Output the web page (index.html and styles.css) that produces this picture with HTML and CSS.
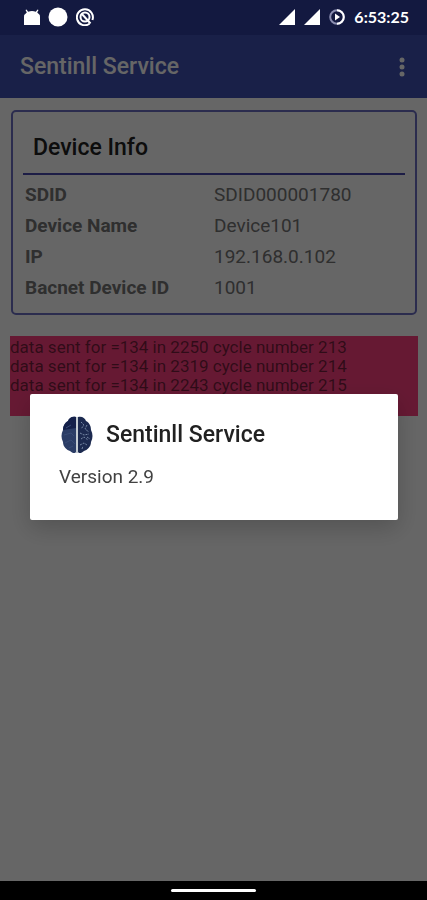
FILE: index.html
```html
<!DOCTYPE html>
<html lang="en">

<head>
  <meta charset="UTF-8" />
  <meta name="viewport" content="width=device-width, initial-scale=1.0">
  <title>Sentinll Service</title>
  <link rel="stylesheet" href="styles.css">
</head>

<body>
  <div class="statusbar">
    <div class="status-icons">
      <svg width="16" height="18" viewBox="0 0 16 18" fill="#fff">
        <path d="M0 17V9a8 6 0 0 1 2.800-4.500L1.500 2l1-.6 1.700 2.400a9 9 0 0 1 7.600 0l1.700-2.400 1 .6-1.300 2.500A8 6 0 0 1 16 9v8z" />
      </svg>
      <svg width="20" height="20" viewBox="0 0 20 20">
        <circle cx="10" cy="10" r="9.500" fill="#fff" />
      </svg>
      <svg width="18" height="18" viewBox="0 0 18 18" fill="none" stroke="#fff">
        <path d="M13.500 15.800A8 8 0 1 1 16.400 12" stroke-width="2" />
        <circle cx="9" cy="9" r="4.500" stroke-width="2" />
        <path d="M5.500 5.500l9 10" stroke-width="2" />
      </svg>
    </div>
    <div class="status-icons status-right">
      <svg width="16" height="16" viewBox="0 0 16 16" fill="#fff">
        <path d="M16 0v16H0z" />
      </svg>
      <svg width="16" height="16" viewBox="0 0 16 16" fill="#fff">
        <path d="M16 0v16H0z" />
      </svg>
      <svg width="16" height="16" viewBox="0 0 16 16" fill="none" stroke="#fff" stroke-width="2">
        <circle cx="8" cy="8" r="6.800" stroke="#8a8db0" />
        <path d="M8 1.200a6.800 6.800 0 0 1 0 13.600" />
        <path d="M6 4.500v7l5-3.500z" fill="#fff" stroke="none" />
      </svg>
      <span class="clock">6:53:25</span>
    </div>
  </div>

  <header class="topbar">
    <h1>Sentinll Service</h1>
    <button type="button" class="menu-btn" aria-label="More options">
      <svg width="6" height="20" viewBox="0 0 6 20" fill="#fff">
        <circle cx="3" cy="3" r="2.500" />
        <circle cx="3" cy="10" r="2.500" />
        <circle cx="3" cy="17" r="2.500" />
      </svg>
    </button>
  </header>

  <main class="main-content">
    <section class="card">
      <h2>Device Info</h2>
      <table class="info">
        <tr>
          <th scope="row">SDID</th>
          <td>SDID000001780</td>
        </tr>
        <tr>
          <th scope="row">Device Name</th>
          <td>Device101</td>
        </tr>
        <tr>
          <th scope="row">IP</th>
          <td>192.168.0.102</td>
        </tr>
        <tr>
          <th scope="row">Bacnet Device ID</th>
          <td>1001</td>
        </tr>
      </table>
    </section>

    <div class="log">
      <p>data sent for =134 in 2250 cycle number 213</p>
      <p>data sent for =134 in 2319 cycle number 214</p>
      <p>data sent for =134 in 2243 cycle number 215</p>
    </div>
  </main>

  <div class="navbar"><span class="nav-handle"></span></div>

  <!-- About dialog -->
  <div class="scrim">
    <div class="dialog" role="dialog" aria-labelledby="about-title">
      <div class="dialog-title">
        <svg width="32" height="38" viewBox="0 0 32 38">
          <path d="M15 1C11 0 8 2 7 5 3 7 2 11 2 14c-2 4-2 8 0 12 0 5 4 8 7 9 2 2 5 3 6 1z" fill="#2b3d66" />
          <path d="M15 1C11 0 8 2 7 5 4 7 2 10 2 14l13-2z" fill="#14204a" />
          <path d="M17 1c4-1 7 1 8 4 4 2 5 6 5 9 2 4 2 8 0 12 0 5-4 8-7 9-2 2-5 3-6 1z" fill="#1c2a50" />
          <path d="M16 1v36" stroke="#c3cbd2" stroke-width="2" />
          <path d="M5 12l5-3M3 19l7-2 3 3M4 27l6-3 4 4M8 32l4-2" fill="none" stroke="#384b75" />
          <path d="M20 6l3 3-3 4M26 9l-2 4 4 3M19 17l4 2 5-1M20 23l3-2 4 3M19 29l4-2 3 2M21 33l1-3M26 21l3 2" fill="none" stroke="#7688a5" stroke-dasharray="2 1" />
        </svg>
        <h2 id="about-title">Sentinll Service</h2>
      </div>
      <p>Version 2.9</p>
    </div>
  </div>
</body>

</html>
```
FILE: styles.css
```css
* {
  margin: 0;
  padding: 0;
  box-sizing: border-box;
}

body {
  min-height: 100vh;
  display: flex;
  flex-direction: column;
  background-color: #fff;
  color: #757575;
  font-family: Roboto, sans-serif;
}

/* system bars stay above the scrim */
.statusbar {
  position: relative;
  z-index: 2;
  height: 35px;
  padding: 0 18px 2px 24px;
  display: flex;
  align-items: center;
  justify-content: space-between;
  background-color: #131940;
}

.status-icons {
  display: flex;
  align-items: center;
  gap: 8px;
}

.status-right {
  gap: 9px;
}

.clock {
  color: #fff;
  font-family: Lato, sans-serif;
  font-size: 16px;
  font-weight: bold;
}

.topbar {
  height: 63px;
  padding: 0 20px;
  display: flex;
  align-items: center;
  justify-content: space-between;
  background-color: #3f51b5;
}

.topbar h1 {
  color: #fff;
  font-size: 23px;
  font-weight: 500;
}

.menu-btn {
  display: flex;
  padding: 0 2px;
  border: none;
  background: none;
  cursor: pointer;
}

.main-content {
  flex: 1;
  padding: 12px 9px 12px 10px;
}

.card {
  margin: 0 1px;
  padding: 10px;
  border: 2px solid #6c6fc4;
  border-radius: 5px;
}

.card h2 {
  padding: 12px 10px 11px;
  border-bottom: 2px solid #4a4ab0;
  color: #212121;
  font-size: 23px;
  font-weight: 500;
  line-height: 28px;
}

.info {
  width: 100%;
  margin-top: 4px;
  border-collapse: collapse;
  font-size: 19px;
  line-height: 31px;
  text-align: left;
}

.info th {
  width: 50%;
  padding-left: 2px;
}

.log {
  min-height: 80px;
  margin-top: 21px;
  padding-top: 2px;
  background-color: #ff4081;
  font-size: 17px;
  line-height: 19px;
}

.log p {
  color: rgba(0, 0, 0, 0.54);
}

.navbar {
  position: relative;
  z-index: 2;
  height: 19px;
  display: flex;
  align-items: center;
  justify-content: center;
  background-color: #000;
}

.nav-handle {
  width: 20%;
  height: 3px;
  border-radius: 2px;
  background-color: #fff;
}

.scrim {
  position: fixed;
  inset: 0;
  z-index: 1;
  padding: 34px 29px 20px 30px;
  display: flex;
  align-items: center;
  background-color: rgba(0, 0, 0, 0.6);
}

.dialog {
  width: 100%;
  padding: 22px 29px 31px;
  border-radius: 2px;
  background-color: #fff;
  color: #424242;
  font-size: 19px;
  line-height: 24px;
  box-shadow: 0 8px 24px rgba(0, 0, 0, 0.2);
}

.dialog-title {
  display: flex;
  align-items: center;
  gap: 13px;
  padding-left: 2px;
  margin-bottom: 11px;
}

.dialog-title h2 {
  color: #212121;
  font-size: 23px;
  font-weight: 500;
}
```
